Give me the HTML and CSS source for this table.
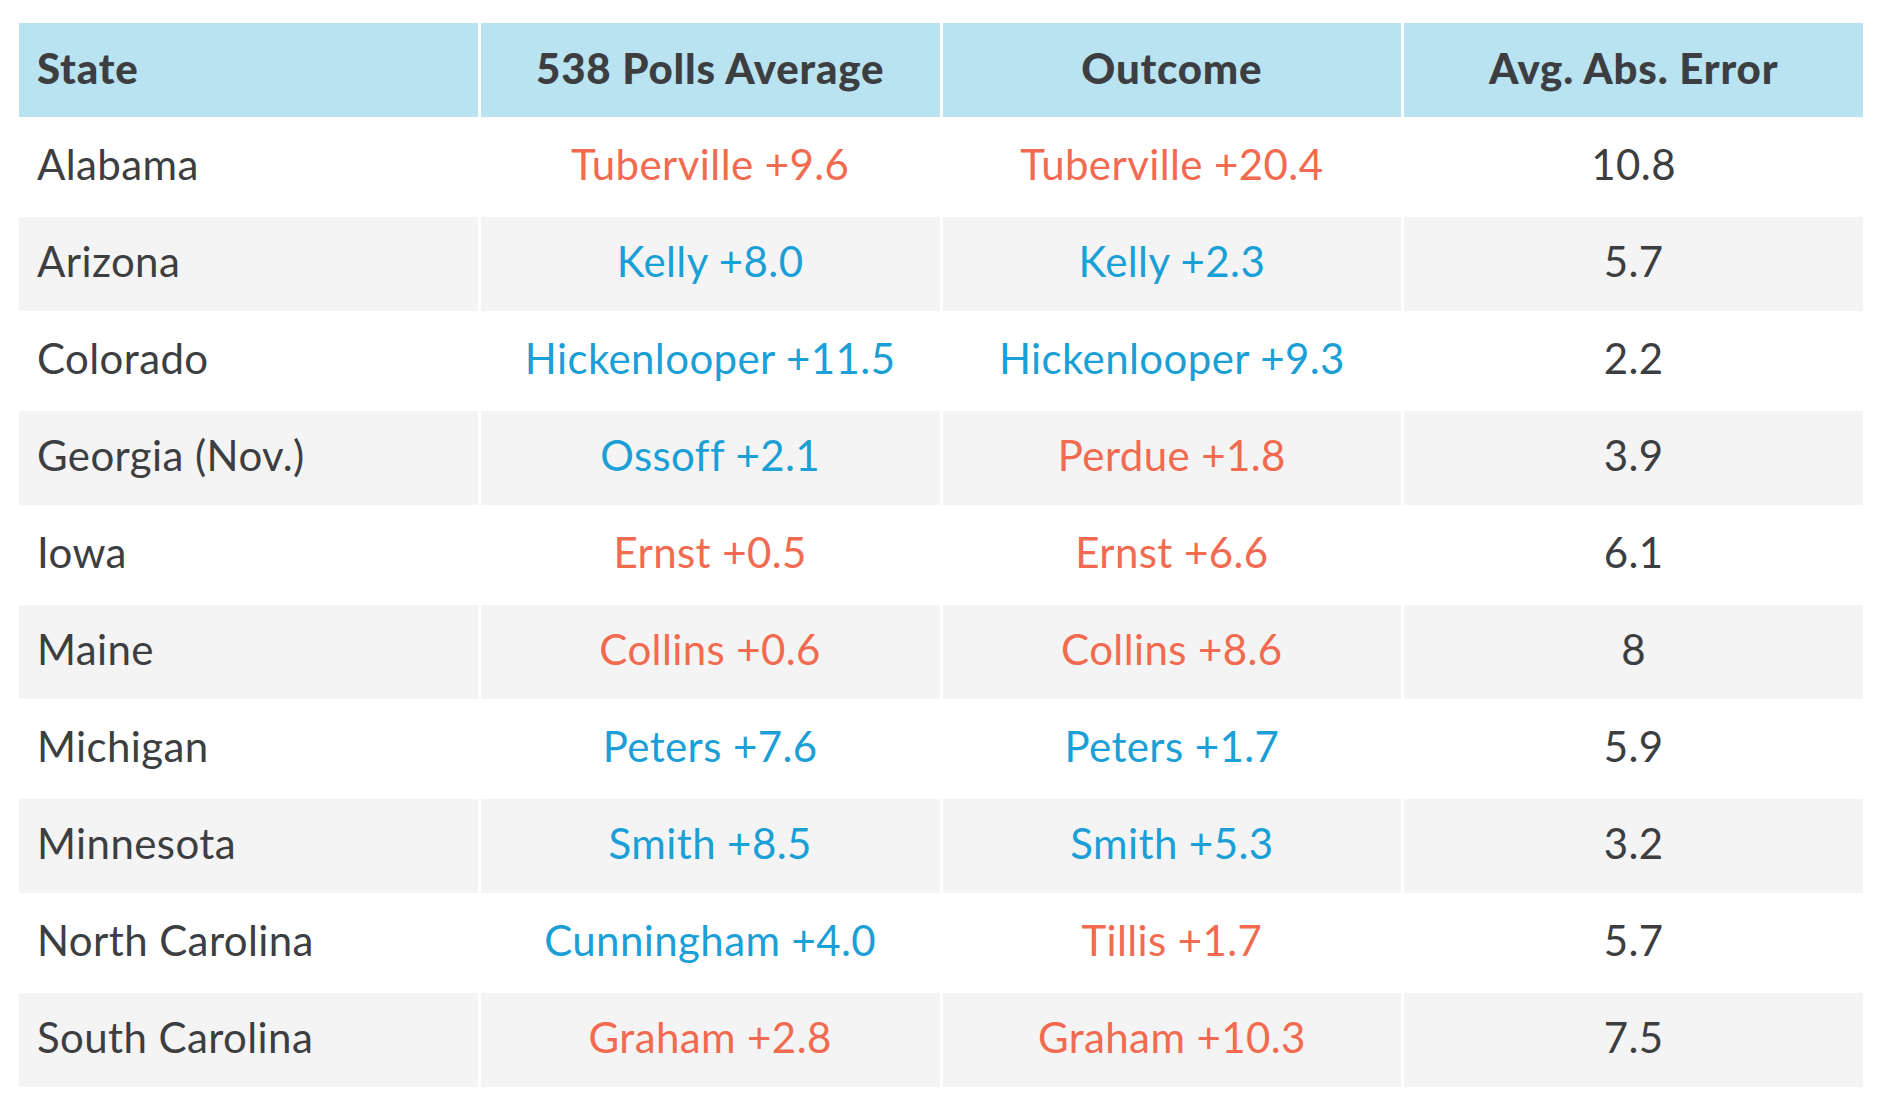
FILE: index.html
```html
<!DOCTYPE html>
<html lang="en">
<head>
<meta charset="utf-8">
<title>Senate polls vs outcome</title>
<link rel="stylesheet" href="styles.css">
</head>
<body>
<table class="results">
  <thead>
    <tr>
      <th class="state">State</th>
      <th>538 Polls Average</th>
      <th>Outcome</th>
      <th>Avg. Abs. Error</th>
    </tr>
  </thead>
  <tbody>
    <tr><td class="state">Alabama</td><td class="rep">Tuberville +9.6</td><td class="rep">Tuberville +20.4</td><td>10.8</td></tr>
    <tr><td class="state">Arizona</td><td class="dem">Kelly +8.0</td><td class="dem">Kelly +2.3</td><td>5.7</td></tr>
    <tr><td class="state">Colorado</td><td class="dem">Hickenlooper +11.5</td><td class="dem">Hickenlooper +9.3</td><td>2.2</td></tr>
    <tr><td class="state">Georgia (Nov.)</td><td class="dem">Ossoff +2.1</td><td class="rep">Perdue +1.8</td><td>3.9</td></tr>
    <tr><td class="state">Iowa</td><td class="rep">Ernst +0.5</td><td class="rep">Ernst +6.6</td><td>6.1</td></tr>
    <tr><td class="state">Maine</td><td class="rep">Collins +0.6</td><td class="rep">Collins +8.6</td><td>8</td></tr>
    <tr><td class="state">Michigan</td><td class="dem">Peters +7.6</td><td class="dem">Peters +1.7</td><td>5.9</td></tr>
    <tr><td class="state">Minnesota</td><td class="dem">Smith +8.5</td><td class="dem">Smith +5.3</td><td>3.2</td></tr>
    <tr><td class="state">North Carolina</td><td class="dem">Cunningham +4.0</td><td class="rep">Tillis +1.7</td><td>5.7</td></tr>
    <tr><td class="state">South Carolina</td><td class="rep">Graham +2.8</td><td class="rep">Graham +10.3</td><td>7.5</td></tr>
  </tbody>
</table>
</body>
</html>
```
FILE: styles.css
```css
html, body {
  margin: 0;
  padding: 0;
  background: #ffffff;
}

body {
  font-family: Lato, "Liberation Sans", sans-serif;
  color: #3c3e41;
}

.results {
  width: 1850px;
  margin: 20px 0 0 16px;
  border-collapse: separate;
  border-spacing: 3px;
  table-layout: fixed;
}

.results th,
.results td {
  box-sizing: border-box;
  height: 94px;
  padding: 0 18px 6px;
  text-align: center;
  vertical-align: middle;
  font-size: 42px;
  line-height: 1;
  letter-spacing: 0.4px;
  white-space: nowrap;
}

.results th {
  background: #b9e3f1;
  font-weight: 900;
  letter-spacing: 0.8px;
  padding-bottom: 4px;
}

.results td {
  font-weight: 400;
}

.results .state {
  text-align: left;
}

.results tbody tr:nth-child(even) td {
  background: #f4f4f4;
}

.rep {
  color: #f26a4f;
}

.dem {
  color: #1a9fd6;
}
```
